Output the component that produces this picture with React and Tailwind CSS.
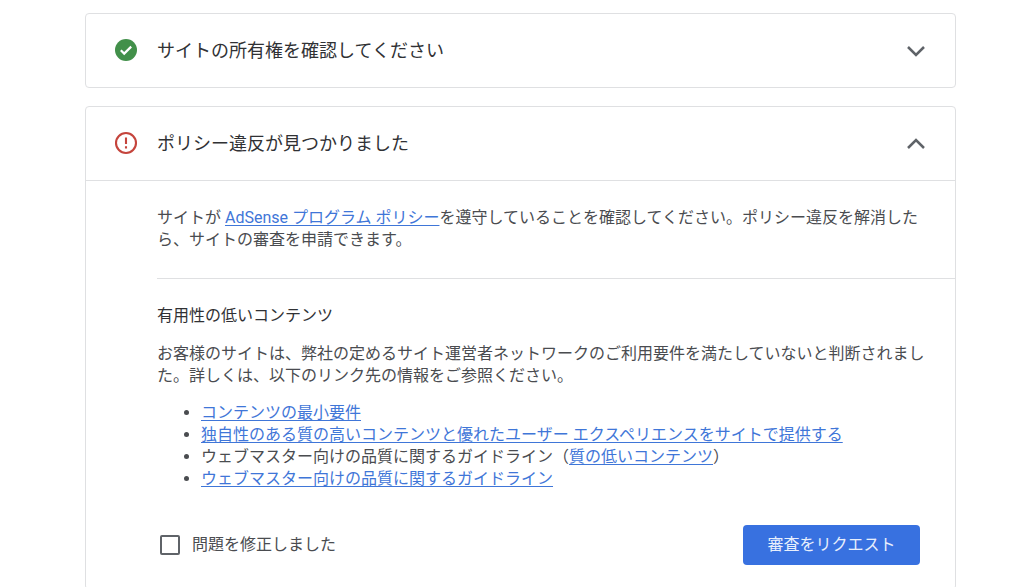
import { useState } from "react";

const CheckIcon = () => (
    <svg width="26" height="26" viewBox="0 0 26 26" fill="none" aria-hidden="true">
        <circle cx="13" cy="12" r="11" fill="#42904a" />
        <path d="M7.8 12.2l3.4 3.4 7-7" stroke="#fff" strokeWidth="2.2" />
    </svg>
);

const ErrorIcon = () => (
    <svg width="26" height="26" viewBox="0 0 26 26" fill="none" stroke="#c5443c" strokeWidth="2.1" aria-hidden="true">
        <circle cx="13" cy="12" r="10" />
        <path d="M13 6.5v6.6M13 15.2v2.2" />
    </svg>
);

const Chevron = ({ up }) => (
    <svg width="34" height="34" viewBox="0 0 34 34" fill="none" stroke="#5f6368" strokeWidth="2.5" aria-hidden="true">
        <path d={up ? "M10 21l8-8 8 8" : "M10 13l8 8 8-8"} />
    </svg>
);

const Link = ({ children }) => (
    <a href="#" className="text-[#3f76d8] underline underline-offset-2 decoration-1">
        {children}
    </a>
);

const Panel = ({ icon, title, open, onToggle, children }) => (
    <section className="rounded border border-[#dfe0e2] bg-white">
        <h2>
            <button
                type="button"
                aria-expanded={open}
                onClick={onToggle}
                className="flex h-[73px] w-full items-center gap-[18px] pl-[27px] pr-[23px] text-left"
            >
                {icon}
                <span className="flex-1 text-lg text-[#303134]">{title}</span>
                <Chevron up={open} />
            </button>
        </h2>
        {open && children}
    </section>
);

const App = () => {
    const [siteOpen, setSiteOpen] = useState(false);
    const [policyOpen, setPolicyOpen] = useState(true);
    const [fixed, setFixed] = useState(false);

    return (
        <main
            lang="ja"
            className="flex flex-col gap-[18px] bg-white pt-[13px] pl-[85px] pr-[68px] font-[Roboto,'Noto_Sans_CJK_JP',sans-serif] text-base leading-[22px] text-[#4a4c50]"
        >
            <Panel
                icon={<CheckIcon />}
                title="サイトの所有権を確認してください"
                open={siteOpen}
                onToggle={() => setSiteOpen(!siteOpen)}
            />

            <Panel
                icon={<ErrorIcon />}
                title="ポリシー違反が見つかりました"
                open={policyOpen}
                onToggle={() => setPolicyOpen(!policyOpen)}
            >
                <div className="border-t border-[#dfe0e2] pl-[71px]">
                    <p className="pt-[26px] pr-6 pb-[27px]">
                        サイトが <Link>AdSense プログラム ポリシー</Link>
                        を遵守していることを確認してください。ポリシー違反を解消したら、サイトの審査を申請できます。
                    </p>

                    <div className="border-t border-[#dfe0e2] pt-[26px] pr-6 pb-6">
                        <h3 className="text-[#303134]">有用性の低いコンテンツ</h3>
                        <p className="mt-4">
                            お客様のサイトは、弊社の定めるサイト運営者ネットワークのご利用要件を満たしていないと判断されました。詳しくは、以下のリンク先の情報をご参照ください。
                        </p>
                        <ul className="mt-[15px] list-disc pl-11">
                            <li>
                                <Link>コンテンツの最小要件</Link>
                            </li>
                            <li>
                                <Link>独自性のある質の高いコンテンツと優れたユーザー エクスペリエンスをサイトで提供する</Link>
                            </li>
                            <li>
                                ウェブマスター向けの品質に関するガイドライン（<Link>質の低いコンテンツ</Link>）
                            </li>
                            <li>
                                <Link>ウェブマスター向けの品質に関するガイドライン</Link>
                            </li>
                        </ul>

                        <div className="mt-[35px] flex items-center justify-between pl-[3px] pr-[11px]">
                            <label className="flex items-center gap-3">
                                <input
                                    type="checkbox"
                                    checked={fixed}
                                    onChange={(e) => setFixed(e.target.checked)}
                                    className="size-5 appearance-none rounded-xs border-2 border-[#5f6368] checked:bg-[#3871e0]"
                                />
                                問題を修正しました
                            </label>
                            <button
                                type="button"
                                className="h-10 w-[177px] rounded bg-[#3871e0] text-[#e8effc]"
                            >
                                審査をリクエスト
                            </button>
                        </div>
                    </div>
                </div>
            </Panel>
        </main>
    );
};

export default App;
